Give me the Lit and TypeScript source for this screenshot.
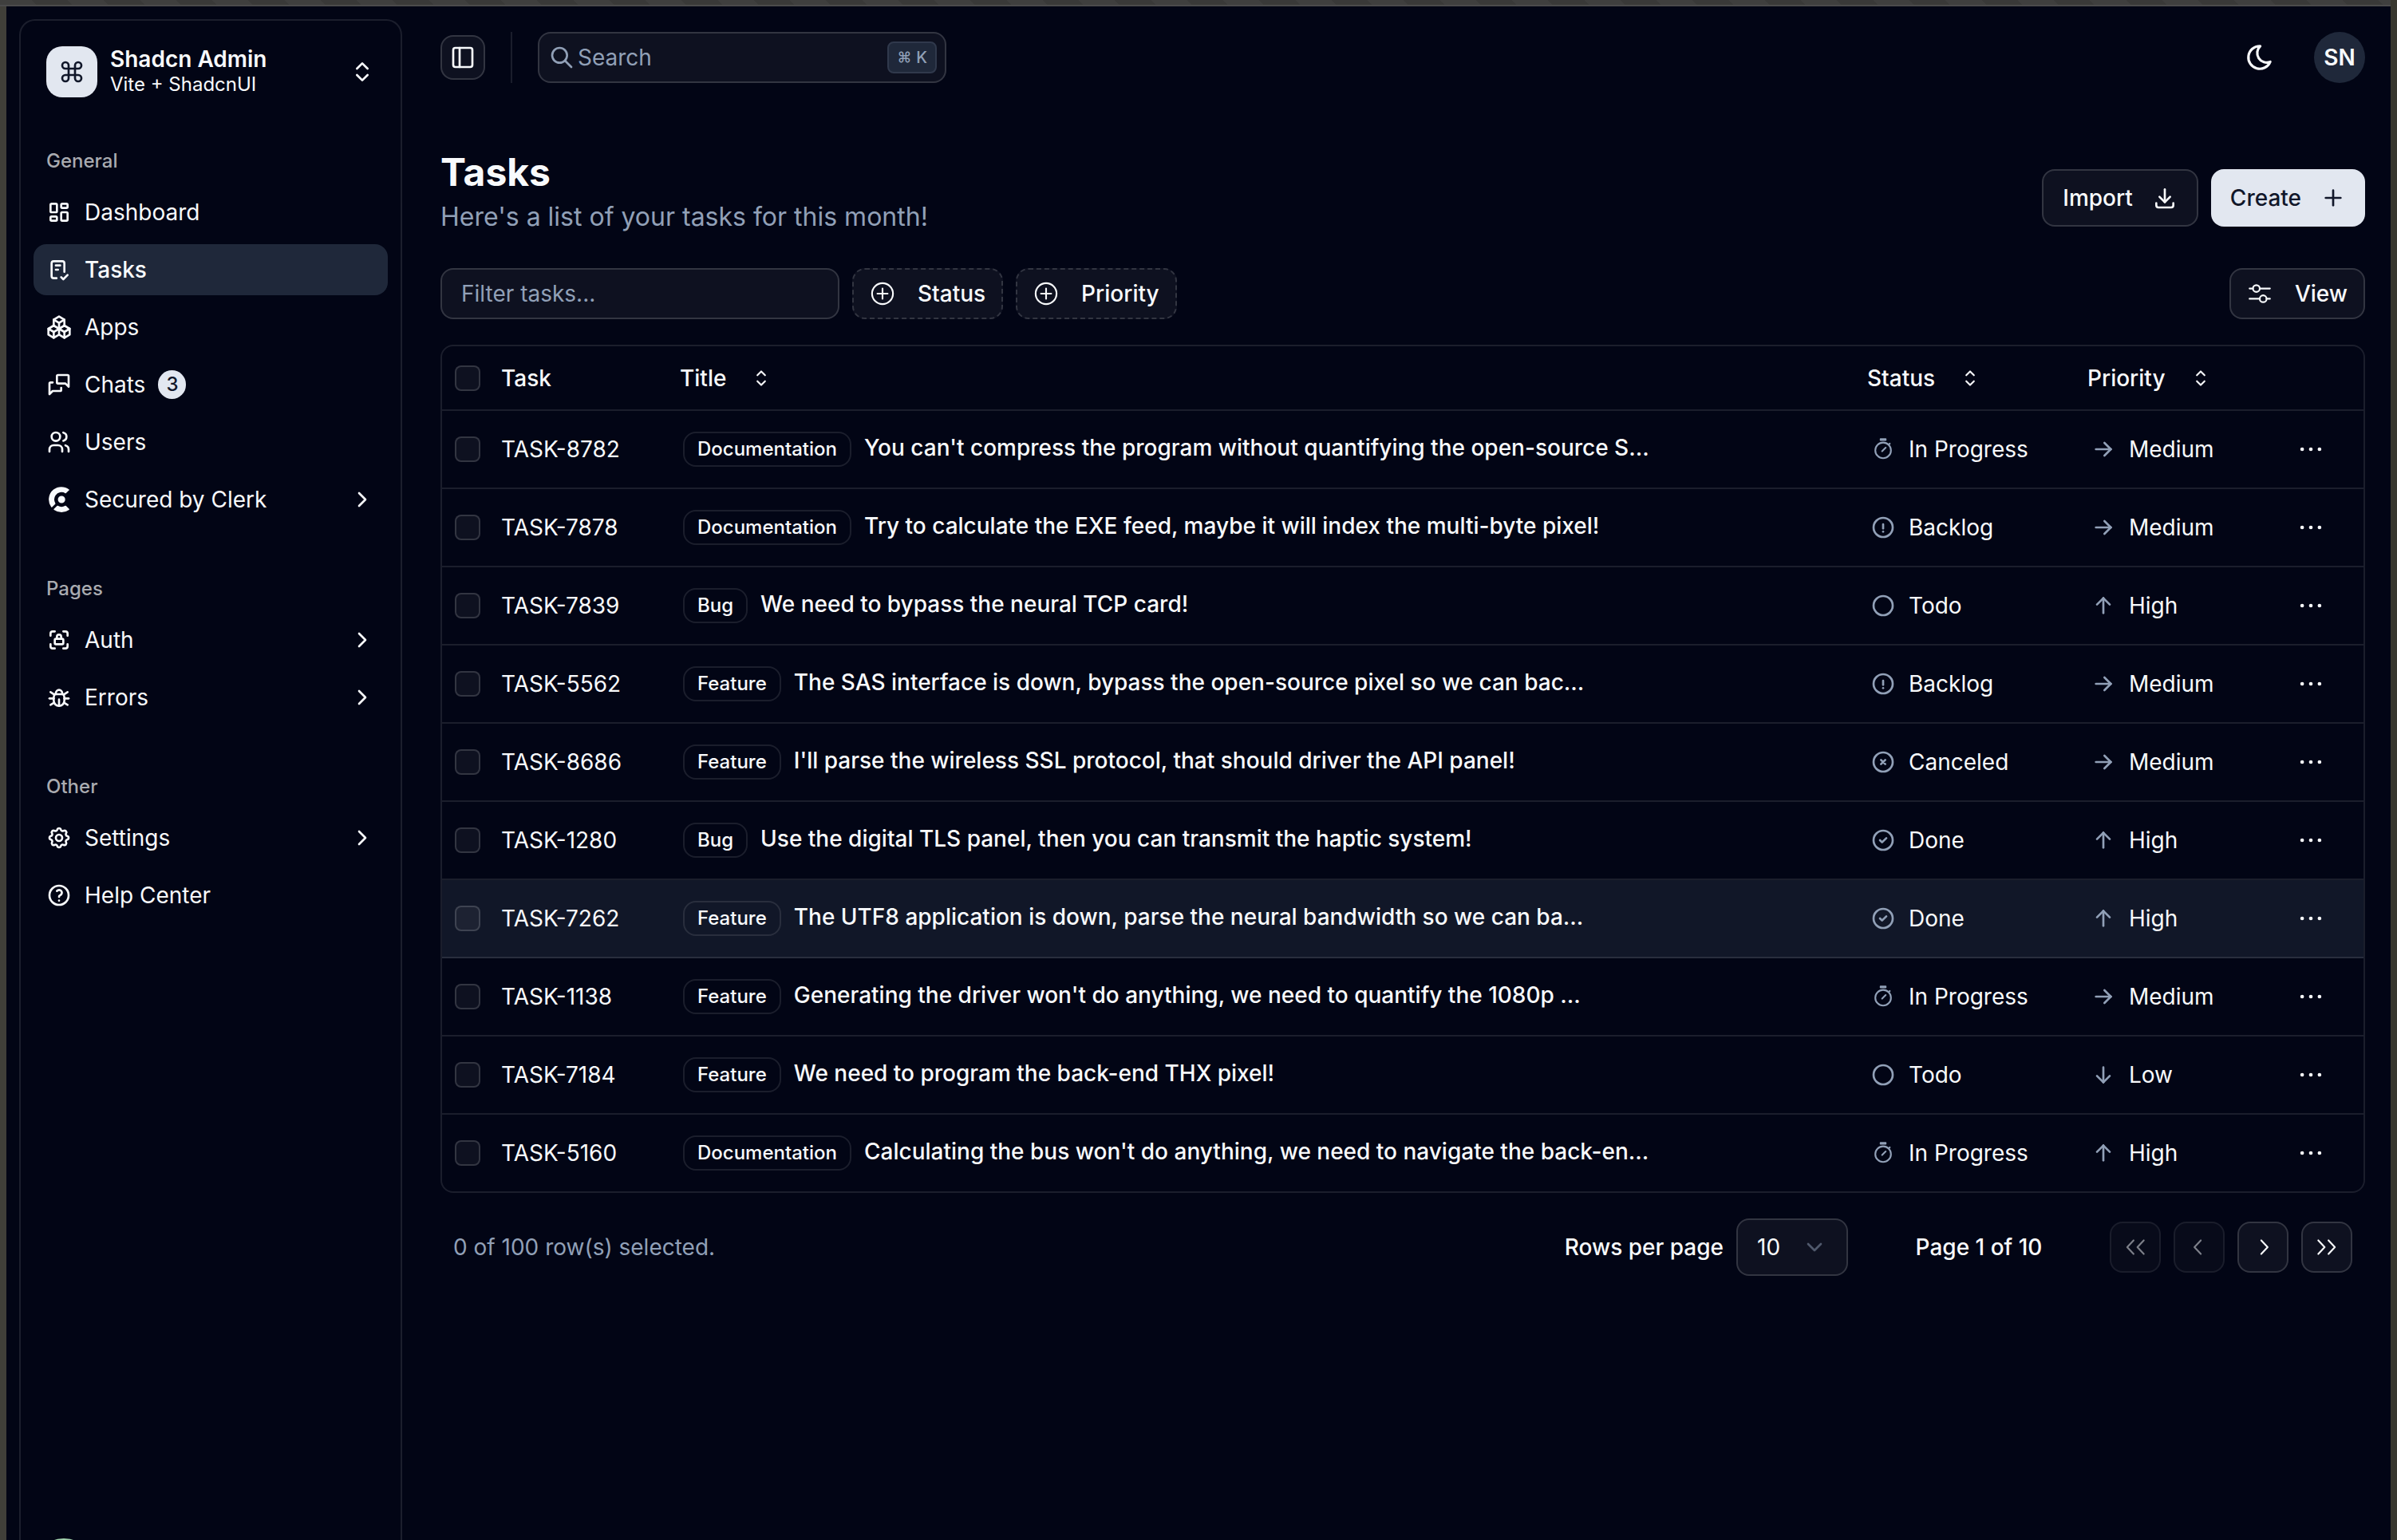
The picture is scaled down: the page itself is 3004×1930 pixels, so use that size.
import { LitElement, html, svg, css, nothing } from "lit";
import { customElement, state } from "lit/decorators.js";
import { classMap } from "lit/directives/class-map.js";

/* ---------- icons ---------- */

const ICONS: Record<string, string[]> = {
  command: ["M15 6v12a3 3 0 1 0 3-3H6a3 3 0 1 0 3 3V6a3 3 0 1 0-3 3h12a3 3 0 1 0-3-3"],
  chevronsUpDown: ["m7 15 5 5 5-5", "m7 9 5-5 5 5"],
  chevronRight: ["m9 18 6-6-6-6"],
  chevronDown: ["m6 9 6 6 6-6"],
  panelLeft: ["M5 3h14a2 2 0 0 1 2 2v14a2 2 0 0 1-2 2H5a2 2 0 0 1-2-2V5a2 2 0 0 1 2-2z", "M9 3v18"],
  dashboard: [
    "M5 4h4a1 1 0 0 1 1 1v6a1 1 0 0 1-1 1H5a1 1 0 0 1-1-1V5a1 1 0 0 1 1-1",
    "M5 16h4a1 1 0 0 1 1 1v2a1 1 0 0 1-1 1H5a1 1 0 0 1-1-1v-2a1 1 0 0 1 1-1",
    "M15 12h4a1 1 0 0 1 1 1v6a1 1 0 0 1-1 1h-4a1 1 0 0 1-1-1v-6a1 1 0 0 1 1-1",
    "M15 4h4a1 1 0 0 1 1 1v2a1 1 0 0 1-1 1h-4a1 1 0 0 1-1-1V5a1 1 0 0 1 1-1",
  ],
  checklist: [
    "M9.615 20h-2.615a2 2 0 0 1-2-2v-12a2 2 0 0 1 2-2h8a2 2 0 0 1 2 2v8",
    "M14 19l2 2l4-4",
    "M9 8h4",
    "M9 12h2",
  ],
  packages: [
    "M7 16.5l-5-3l5-3l5 3v5.5l-5 3z",
    "M2 13.5v5.5l5 3",
    "M7 16.545l5-3.03",
    "M17 16.5l-5-3l5-3l5 3v5.5l-5 3z",
    "M12 19l5 3",
    "M17 16.5l5-3",
    "M12 13.5v-5.5l-5-3l5-3l5 3v5.5",
    "M7 5.03v5.455",
    "M12 8l5-3",
  ],
  messages: [
    "M21 14l-3-3h-7a1 1 0 0 1-1-1v-6a1 1 0 0 1 1-1h9a1 1 0 0 1 1 1v10",
    "M14 15v2a1 1 0 0 1-1 1h-7l-3 3v-10a1 1 0 0 1 1-1h2",
  ],
  users: [
    "M5 7a4 4 0 1 0 8 0a4 4 0 1 0-8 0",
    "M3 21v-2a4 4 0 0 1 4-4h4a4 4 0 0 1 4 4v2",
    "M16 3.13a4 4 0 0 1 0 7.75",
    "M21 21v-2a4 4 0 0 0-3-3.85",
  ],
  lock: [
    "M4 8v-2a2 2 0 0 1 2-2h2",
    "M4 16v2a2 2 0 0 0 2 2h2",
    "M16 4h2a2 2 0 0 1 2 2v2",
    "M16 20h2a2 2 0 0 0 2-2v-2",
    "M8 12a1 1 0 0 1 1-1h6a1 1 0 0 1 1 1v3a1 1 0 0 1-1 1h-6a1 1 0 0 1-1-1z",
    "M10 11v-2a2 2 0 1 1 4 0v2",
  ],
  bug: [
    "M9 9v-1a3 3 0 0 1 6 0v1",
    "M8 9h8a6 6 0 0 1 1 3v3a5 5 0 0 1-10 0v-3a6 6 0 0 1 1-3",
    "M3 13h4",
    "M17 13h4",
    "M12 20v-6",
    "M4 19l3.35-2",
    "M20 19l-3.35-2",
    "M4 7l3.75 2.4",
    "M20 7l-3.75 2.4",
  ],
  settings: [
    "M10.325 4.317c.426-1.756 2.924-1.756 3.35 0a1.724 1.724 0 0 0 2.573 1.066c1.543-.94 3.31.826 2.37 2.37a1.724 1.724 0 0 0 1.065 2.572c1.756.426 1.756 2.924 0 3.35a1.724 1.724 0 0 0-1.066 2.573c.94 1.543-.826 3.31-2.37 2.37a1.724 1.724 0 0 0-2.572 1.065c-.426 1.756-2.924 1.756-3.35 0a1.724 1.724 0 0 0-2.573-1.066c-1.543.94-3.31-.826-2.37-2.37a1.724 1.724 0 0 0-1.065-2.572c-1.756-.426-1.756-2.924 0-3.35a1.724 1.724 0 0 0 1.066-2.573c-.94-1.543.826-3.31 2.37-2.37c1 .608 2.296.07 2.572-1.065z",
    "M9 12a3 3 0 1 0 6 0a3 3 0 0 0-6 0",
  ],
  help: [
    "M3 12a9 9 0 1 0 18 0a9 9 0 1 0-18 0",
    "M12 17v.01",
    "M12 13.5a1.5 1.5 0 0 1 1-1.5a2.6 2.6 0 1 0-3-4",
  ],
  search: ["M3 10a7 7 0 1 0 14 0a7 7 0 1 0-14 0", "M21 21l-6-6"],
  moon: ["M12 3c.132 0 .263 0 .393 0a7.5 7.5 0 0 0 7.92 12.446a9 9 0 1 1-8.313-12.454z"],
  download: ["M4 17v2a2 2 0 0 0 2 2h12a2 2 0 0 0 2-2v-2", "M7 11l5 5l5-5", "M12 4v12"],
  plus: ["M12 5v14", "M5 12h14"],
  circle: ["M3 12a9 9 0 1 0 18 0a9 9 0 1 0-18 0"],
  exclamation: ["M3 12a9 9 0 1 0 18 0a9 9 0 1 0-18 0", "M12 9v4", "M12 16v.01"],
  circleX: ["M3 12a9 9 0 1 0 18 0a9 9 0 1 0-18 0", "M10 10l4 4m0-4l-4 4"],
  circleCheck: ["M3 12a9 9 0 1 0 18 0a9 9 0 1 0-18 0", "M9 12l2 2l4-4"],
  arrowRight: ["M5 12h14", "M13 18l6-6", "M13 6l6 6"],
  arrowUp: ["M12 5v14", "M18 11l-6-6", "M6 11l6-6"],
  arrowDown: ["M12 5v14", "M18 13l-6 6", "M6 13l6 6"],
};

// Drawn on a 15-unit grid with a thinner line.
const THIN_ICONS: Record<string, string[]> = {
  sort: ["M5.25 5.75 7.5 3.5 9.75 5.75", "M5.25 9.25 7.5 11.5 9.75 9.25"],
  plusCircled: ["M1.35 7.5a6.15 6.15 0 1 0 12.3 0a6.15 6.15 0 1 0-12.3 0", "M7.5 4.5v6M4.5 7.5h6"],
  mixer: [
    "M3.5 4.5a2 2 0 1 0 4 0a2 2 0 1 0-4 0",
    "M7.5 10.5a2 2 0 1 0 4 0a2 2 0 1 0-4 0",
    "M1.5 4.5h2M7.5 4.5h6M1.5 10.5h6M11.5 10.5h2",
  ],
  next: ["M6.5 3.5 10.25 7.5 6.5 11.5"],
  prev: ["M8.5 3.5 4.75 7.5 8.5 11.5"],
  last: ["M2.5 3.5 6.25 7.5 2.5 11.5", "M8.5 3.5 12.25 7.5 8.5 11.5"],
  first: ["M6.5 3.5 2.75 7.5 6.5 11.5", "M12.5 3.5 8.75 7.5 12.5 11.5"],
  stopwatch: ["M2.9 8.15a4.6 4.6 0 1 0 9.2 0a4.6 4.6 0 1 0-9.2 0", "M6.9 8.7 9 6.6", "M6 1.6h3M6 2.1h3", "M10.8 4.8l.6-.6"],
};

const icon = (name: string) => {
  const thin = name in THIN_ICONS;
  const paths = thin ? THIN_ICONS[name] : ICONS[name];
  return html`<svg
    class="icon"
    viewBox=${thin ? "0 0 15 15" : "0 0 24 24"}
    fill="none"
    stroke="currentColor"
    stroke-width=${thin ? "1" : "2"}
    stroke-linecap="round"
    stroke-linejoin="round"
    aria-hidden="true"
  >
    ${paths.map((d) => svg`<path d=${d}></path>`)}
  </svg>`;
};

const clerkIcon = html`<svg class="icon" viewBox="0 0 24 24" fill="currentColor" aria-hidden="true">
  <path
    d="m21.47 20.829-2.881-2.881a.572.572 0 0 0-.7-.084 6.854 6.854 0 0 1-7.081 0 .576.576 0 0 0-.7.084l-2.881 2.881a.576.576 0 0 0-.103.69.57.57 0 0 0 .166.186 12 12 0 0 0 14.113 0 .58.58 0 0 0 .239-.423.576.576 0 0 0-.172-.453Zm.002-17.668-2.88 2.88a.569.569 0 0 1-.701.084A6.857 6.857 0 0 0 8.724 8.08a6.862 6.862 0 0 0-1.222 3.692 6.86 6.86 0 0 0 .978 3.764.573.573 0 0 1-.083.699l-2.881 2.88a.567.567 0 0 1-.864-.063A11.993 11.993 0 0 1 6.771 2.7a11.99 11.99 0 0 1 14.637-.05.57.57 0 0 1 .232.418.57.57 0 0 1-.168.448Zm-7.118 12.261a3.427 3.427 0 1 0 0-6.854 3.427 3.427 0 0 0 0 6.854Z"
  ></path>
</svg>`;

const dotsIcon = html`<svg class="icon" viewBox="0 0 15 15" fill="currentColor" aria-hidden="true">
  <circle cx="2.4" cy="7.5" r="1.1"></circle>
  <circle cx="7.5" cy="7.5" r="1.1"></circle>
  <circle cx="12.6" cy="7.5" r="1.1"></circle>
</svg>`;

/* ---------- data ---------- */

interface NavItem {
  label: string;
  icon: string;
  active?: boolean;
  badge?: string;
  expandable?: boolean;
}

const NAV: { title: string; items: NavItem[] }[] = [
  {
    title: "General",
    items: [
      { label: "Dashboard", icon: "dashboard" },
      { label: "Tasks", icon: "checklist", active: true },
      { label: "Apps", icon: "packages" },
      { label: "Chats", icon: "messages", badge: "3" },
      { label: "Users", icon: "users" },
      { label: "Secured by Clerk", icon: "clerk", expandable: true },
    ],
  },
  {
    title: "Pages",
    items: [
      { label: "Auth", icon: "lock", expandable: true },
      { label: "Errors", icon: "bug", expandable: true },
    ],
  },
  {
    title: "Other",
    items: [
      { label: "Settings", icon: "settings", expandable: true },
      { label: "Help Center", icon: "help" },
    ],
  },
];

type Status = "In Progress" | "Backlog" | "Todo" | "Canceled" | "Done";
type Priority = "Low" | "Medium" | "High";

interface Task {
  id: string;
  label: string;
  title: string;
  status: Status;
  priority: Priority;
}

const STATUS_ICON: Record<Status, string> = {
  "In Progress": "stopwatch",
  Backlog: "exclamation",
  Todo: "circle",
  Canceled: "circleX",
  Done: "circleCheck",
};

const PRIORITY_ICON: Record<Priority, string> = {
  Low: "arrowDown",
  Medium: "arrowRight",
  High: "arrowUp",
};

const TASKS: Task[] = [
  { id: "TASK-8782", label: "Documentation", title: "You can't compress the program without quantifying the open-source S…", status: "In Progress", priority: "Medium" },
  { id: "TASK-7878", label: "Documentation", title: "Try to calculate the EXE feed, maybe it will index the multi-byte pixel!", status: "Backlog", priority: "Medium" },
  { id: "TASK-7839", label: "Bug", title: "We need to bypass the neural TCP card!", status: "Todo", priority: "High" },
  { id: "TASK-5562", label: "Feature", title: "The SAS interface is down, bypass the open-source pixel so we can bac…", status: "Backlog", priority: "Medium" },
  { id: "TASK-8686", label: "Feature", title: "I'll parse the wireless SSL protocol, that should driver the API panel!", status: "Canceled", priority: "Medium" },
  { id: "TASK-1280", label: "Bug", title: "Use the digital TLS panel, then you can transmit the haptic system!", status: "Done", priority: "High" },
  { id: "TASK-7262", label: "Feature", title: "The UTF8 application is down, parse the neural bandwidth so we can ba…", status: "Done", priority: "High" },
  { id: "TASK-1138", label: "Feature", title: "Generating the driver won't do anything, we need to quantify the 1080p …", status: "In Progress", priority: "Medium" },
  { id: "TASK-7184", label: "Feature", title: "We need to program the back-end THX pixel!", status: "Todo", priority: "Low" },
  { id: "TASK-5160", label: "Documentation", title: "Calculating the bus won't do anything, we need to navigate the back-en…", status: "In Progress", priority: "High" },
];

/* ---------- shared styles ---------- */

const base = css`
  * {
    box-sizing: border-box;
  }
  button,
  input,
  select {
    margin: 0;
    font: inherit;
    color: inherit;
  }
  button {
    display: inline-flex;
    align-items: center;
    justify-content: center;
    padding: 0;
    border: 0;
    background: none;
    white-space: nowrap;
    cursor: pointer;
  }
  .icon {
    display: block;
    flex: none;
    width: 32px;
    height: 32px;
  }
  .outline {
    border: 2px solid var(--input);
    border-radius: 16px;
    background: var(--control);
  }
`;

/* ---------- sidebar ---------- */

@customElement("app-sidebar")
export class AppSidebar extends LitElement {
  static styles = [
    base,
    css`
      :host {
        display: flex;
        flex: none;
        width: 512px;
        padding: 16px 16px 0;
      }
      .panel {
        flex: 1;
        min-width: 0;
        border: 2px solid var(--border);
        border-bottom: 0;
        border-radius: 20px 20px 0 0;
      }
      .team {
        display: flex;
        align-items: center;
        gap: 16px;
        width: 100%;
        padding: 32px;
        text-align: left;
      }
      .logo {
        display: grid;
        place-items: center;
        flex: none;
        width: 64px;
        height: 64px;
        border-radius: 20px;
        background: var(--primary);
        color: var(--primary-fg);
      }
      .names {
        flex: 1;
        min-width: 0;
      }
      .name {
        display: block;
        font-weight: 600;
        line-height: 32px;
      }
      .plan {
        display: block;
        font-size: 24px;
        line-height: 32px;
      }
      .group {
        padding: 16px;
      }
      .group + .group {
        margin-top: 16px;
      }
      .group-title {
        display: flex;
        align-items: center;
        height: 64px;
        margin: 0;
        padding: 0 16px;
        font-size: 24px;
        font-weight: 500;
        color: #a9abb0;
      }
      .items {
        display: flex;
        flex-direction: column;
        gap: 8px;
        margin: 0;
        padding: 0;
        list-style: none;
      }
      .item {
        display: flex;
        align-items: center;
        gap: 16px;
        height: 64px;
        padding: 0 16px;
        border-radius: 16px;
        color: inherit;
        text-decoration: none;
      }
      .item.active {
        background: var(--accent);
        font-weight: 500;
      }
      .more {
        display: flex;
        margin-left: auto;
      }
      .badge {
        padding: 0 8px;
        border: 2px solid transparent;
        border-radius: 18px;
        background: var(--primary);
        color: var(--primary-fg);
        font-size: 24px;
        font-weight: 500;
        line-height: 32px;
      }
    `,
  ];

  render() {
    return html`
      <aside class="panel">
        <button class="team" type="button">
          <span class="logo">${icon("command")}</span>
          <span class="names">
            <span class="name">Shadcn Admin</span>
            <span class="plan">Vite + ShadcnUI</span>
          </span>
          ${icon("chevronsUpDown")}
        </button>
        <nav>
          ${NAV.map(
            (group) => html`
              <section class="group">
                <h2 class="group-title">${group.title}</h2>
                <ul class="items">
                  ${group.items.map(
                    (item) => html`<li>
                      <a href="#" class=${classMap({ item: true, active: !!item.active })}>
                        ${item.icon === "clerk" ? clerkIcon : icon(item.icon)}
                        <span>${item.label}</span>
                        ${item.badge ? html`<span class="badge">${item.badge}</span>` : nothing}
                        ${item.expandable ? html`<span class="more">${icon("chevronRight")}</span>` : nothing}
                      </a>
                    </li>`,
                  )}
                </ul>
              </section>
            `,
          )}
        </nav>
      </aside>
    `;
  }
}

/* ---------- top bar ---------- */

@customElement("app-topbar")
export class AppTopbar extends LitElement {
  static styles = [
    base,
    css`
      :host {
        display: flex;
        align-items: center;
        gap: 32px;
        height: 128px;
        padding: 0 32px;
      }
      .toggle {
        width: 56px;
        height: 56px;
      }
      .divider {
        width: 2px;
        height: 64px;
        background: var(--border);
      }
      .search {
        display: flex;
        align-items: center;
        gap: 4px;
        width: 512px;
        height: 64px;
        padding: 0 10px 0 12px;
        color: var(--muted);
      }
      .search input {
        flex: 1;
        min-width: 0;
        padding: 0;
        border: 0;
        outline: 0;
        background: none;
      }
      .search input::placeholder {
        color: var(--muted);
        opacity: 1;
      }
      kbd {
        display: flex;
        align-items: center;
        gap: 6px;
        height: 40px;
        padding: 0 10px;
        border: 2px solid #30394c;
        border-radius: 8px;
        background: var(--accent);
        font-family: inherit;
        font-size: 20px;
        font-weight: 500;
      }
      .modifier {
        font-size: 18px;
      }
      .actions {
        display: flex;
        align-items: center;
        gap: 32px;
        margin-left: auto;
      }
      .theme {
        width: 72px;
        height: 72px;
      }
      .theme .icon {
        width: 38px;
        height: 38px;
      }
      .avatar {
        width: 64px;
        height: 64px;
        border-radius: 50%;
        background: var(--accent);
        font-weight: 600;
      }
    `,
  ];

  render() {
    return html`
      <button class="toggle outline" type="button" aria-label="Toggle sidebar">${icon("panelLeft")}</button>
      <span class="divider"></span>
      <label class="search outline">
        ${icon("search")}
        <input type="text" placeholder="Search" aria-label="Search" />
        <kbd><span class="modifier">⌘</span><span>K</span></kbd>
      </label>
      <div class="actions">
        <button class="theme" type="button" aria-label="Toggle theme">${icon("moon")}</button>
        <button class="avatar" type="button">SN</button>
      </div>
    `;
  }
}

/* ---------- task table ---------- */

@customElement("task-table")
export class TaskTable extends LitElement {
  @state() private highlighted = "TASK-7262";

  static styles = [
    base,
    css`
      :host {
        display: block;
      }
      .frame {
        overflow: hidden;
        border: 2px solid var(--border);
        border-radius: 16px;
      }
      table {
        width: 100%;
        border-collapse: separate;
        border-spacing: 0;
        table-layout: fixed;
      }
      .col-check {
        width: 58px;
      }
      .col-id {
        width: 224px;
      }
      .col-status {
        width: 276px;
      }
      .col-priority {
        width: 248px;
      }
      .col-menu {
        width: 114px;
      }
      th,
      td {
        padding: 0 16px;
        border-bottom: 2px solid var(--border);
        text-align: left;
        vertical-align: middle;
      }
      th {
        height: 81px;
        font-weight: 500;
      }
      td {
        height: 98px;
      }
      td.inset {
        padding-left: 20px;
      }
      tbody tr:last-child td {
        height: 96px;
        border-bottom: 0;
      }
      tr.highlighted td {
        background: #111728;
      }
      .sort {
        gap: 28px;
        font-weight: 500;
      }
      .check {
        display: block;
        width: 32px;
        height: 32px;
        appearance: none;
        border: 2px solid var(--input);
        border-radius: 8px;
        background: var(--control);
      }
      .title-cell {
        display: flex;
        align-items: flex-start;
        gap: 16px;
      }
      .label {
        flex: none;
        padding: 4px 16px;
        border: 2px solid var(--border);
        border-radius: 16px;
        font-size: 24px;
        font-weight: 500;
        line-height: 32px;
      }
      .title {
        overflow: hidden;
        max-width: 992px;
        font-weight: 500;
        line-height: 40px;
        text-overflow: ellipsis;
        white-space: nowrap;
      }
      .state {
        display: flex;
        align-items: center;
        gap: 16px;
      }
      .state .icon {
        color: var(--muted);
      }
      .menu {
        width: 64px;
        height: 64px;
      }
    `,
  ];

  private sortHeader(label: string) {
    return html`<th scope="col"><button class="sort" type="button">${label}${icon("sort")}</button></th>`;
  }

  render() {
    return html`
      <div class="frame">
        <table>
          <colgroup>
            <col class="col-check" />
            <col class="col-id" />
            <col />
            <col class="col-status" />
            <col class="col-priority" />
            <col class="col-menu" />
          </colgroup>
          <thead>
            <tr>
              <th scope="col"><input class="check" type="checkbox" aria-label="Select all" /></th>
              <th scope="col">Task</th>
              ${this.sortHeader("Title")} ${this.sortHeader("Status")} ${this.sortHeader("Priority")}
              <th></th>
            </tr>
          </thead>
          <tbody>
            ${TASKS.map(
              (task) => html`
                <tr
                  class=${classMap({ highlighted: task.id === this.highlighted })}
                  @pointerenter=${() => (this.highlighted = task.id)}
                >
                  <td><input class="check" type="checkbox" aria-label="Select ${task.id}" /></td>
                  <td>${task.id}</td>
                  <td class="inset">
                    <div class="title-cell">
                      <span class="label">${task.label}</span>
                      <span class="title">${task.title}</span>
                    </div>
                  </td>
                  <td class="inset">
                    <div class="state">${icon(STATUS_ICON[task.status])}<span>${task.status}</span></div>
                  </td>
                  <td class="inset">
                    <div class="state">${icon(PRIORITY_ICON[task.priority])}<span>${task.priority}</span></div>
                  </td>
                  <td><button class="menu" type="button" aria-label="Open menu">${dotsIcon}</button></td>
                </tr>
              `,
            )}
          </tbody>
        </table>
      </div>
    `;
  }
}

/* ---------- pagination ---------- */

@customElement("task-pagination")
export class TaskPagination extends LitElement {
  static styles = [
    base,
    css`
      :host {
        display: flex;
        align-items: center;
        padding: 0 16px;
      }
      .selected {
        flex: 1;
        color: var(--muted);
      }
      .strong {
        font-weight: 500;
      }
      .rows {
        display: flex;
        align-items: center;
        gap: 16px;
      }
      .picker {
        display: grid;
        align-items: center;
        width: 140px;
      }
      .picker > * {
        grid-area: 1 / 1;
      }
      .picker select {
        width: 100%;
        height: 72px;
        padding: 0 24px;
        appearance: none;
      }
      .picker .icon {
        justify-self: end;
        margin-right: 26px;
        color: var(--muted);
        opacity: 0.5;
        pointer-events: none;
      }
      .page {
        width: 200px;
        margin: 0 64px;
        text-align: center;
      }
      .pager {
        display: flex;
        gap: 16px;
      }
      .step {
        width: 64px;
        height: 64px;
      }
      .step:disabled {
        opacity: 0.5;
      }
    `,
  ];

  render() {
    return html`
      <span class="selected">0 of 100 row(s) selected.</span>
      <div class="rows">
        <label class="strong" for="rows">Rows per page</label>
        <div class="picker">
          <select id="rows" class="outline">
            <option>10</option>
            <option>20</option>
            <option>30</option>
          </select>
          ${icon("chevronDown")}
        </div>
      </div>
      <span class="page strong">Page 1 of 10</span>
      <div class="pager">
        <button class="step outline" type="button" aria-label="Go to first page" disabled>${icon("first")}</button>
        <button class="step outline" type="button" aria-label="Go to previous page" disabled>${icon("prev")}</button>
        <button class="step outline" type="button" aria-label="Go to next page">${icon("next")}</button>
        <button class="step outline" type="button" aria-label="Go to last page">${icon("last")}</button>
      </div>
    `;
  }
}

/* ---------- page ---------- */

@customElement("app-root")
export class AppRoot extends LitElement {
  static styles = [
    base,
    css`
      :host {
        --bg: #020515;
        --fg: #f8fafc;
        --muted: #91a0b7;
        --primary: #e2e7f0;
        --primary-fg: #11172a;
        --accent: #1f283a;
        --border: rgb(255 255 255 / 10%);
        --input: rgb(255 255 255 / 15%);
        --control: rgb(255 255 255 / 5%);
        display: block;
        color: var(--fg);
        font-family: Inter, "Liberation Sans", sans-serif;
        font-size: 28px;
        line-height: 40px;
      }
      .window {
        display: flex;
        flex-direction: column;
        min-height: 100vh;
        background: linear-gradient(90deg, #403f39, #38372f);
      }
      .titlebar {
        flex: none;
        height: 8px;
        margin-right: 8px;
        border-bottom: 2px solid #4b4b4b;
        background: repeating-linear-gradient(45deg, #3f3f3e 0 32px, #393938 32px 64px);
      }
      .app {
        display: flex;
        flex: 1;
        margin: 0 8px;
        background: var(--bg);
      }
      .content {
        flex: 1;
        min-width: 0;
      }
      main {
        padding: 48px 32px;
      }
      .heading {
        display: flex;
        align-items: center;
        justify-content: space-between;
        gap: 32px;
        height: 128px;
        margin-bottom: 24px;
      }
      h1 {
        margin: 0;
        font-size: 48px;
        font-weight: 700;
        line-height: 64px;
      }
      .intro {
        margin: 0;
        padding-bottom: 16px;
        font-size: 32px;
        line-height: 48px;
        color: var(--muted);
      }
      .buttons {
        display: flex;
        gap: 16px;
      }
      .button {
        gap: 24px;
        height: 72px;
        padding: 0 24px;
        font-weight: 500;
      }
      .solid {
        border-radius: 16px;
        background: var(--primary);
        color: var(--primary-fg);
      }
      .toolbar {
        display: flex;
        gap: 16px;
        margin-bottom: 32px;
      }
      .filter {
        width: 500px;
        height: 64px;
        padding: 0 24px;
        outline: 0;
      }
      .filter::placeholder {
        color: var(--muted);
        opacity: 1;
      }
      .facet {
        gap: 28px;
        height: 64px;
        padding: 0 20px;
        font-weight: 500;
      }
      .dashed {
        border-style: dashed;
      }
      .view {
        margin-left: auto;
      }
      task-table {
        margin-bottom: 32px;
      }
      .devtools {
        position: fixed;
        bottom: -78px;
        left: 40px;
        width: 80px;
        height: 80px;
        border-radius: 50%;
        background: #a3d3ae;
      }
    `,
  ];

  render() {
    return html`
      <div class="window">
        <div class="titlebar"></div>
        <div class="app">
          <app-sidebar></app-sidebar>
          <div class="content">
            <app-topbar></app-topbar>
            <main>
              <div class="heading">
                <div>
                  <h1>Tasks</h1>
                  <p class="intro">Here's a list of your tasks for this month!</p>
                </div>
                <div class="buttons">
                  <button class="button outline" type="button">Import${icon("download")}</button>
                  <button class="button solid" type="button">Create${icon("plus")}</button>
                </div>
              </div>
              <div class="toolbar">
                <input class="filter outline" type="text" placeholder="Filter tasks..." aria-label="Filter tasks" />
                <button class="facet outline dashed" type="button">${icon("plusCircled")}Status</button>
                <button class="facet outline dashed" type="button">${icon("plusCircled")}Priority</button>
                <button class="facet outline view" type="button">${icon("mixer")}View</button>
              </div>
              <task-table></task-table>
              <task-pagination></task-pagination>
            </main>
          </div>
        </div>
      </div>
      <button class="devtools" type="button" aria-label="Open developer tools"></button>
    `;
  }
}
